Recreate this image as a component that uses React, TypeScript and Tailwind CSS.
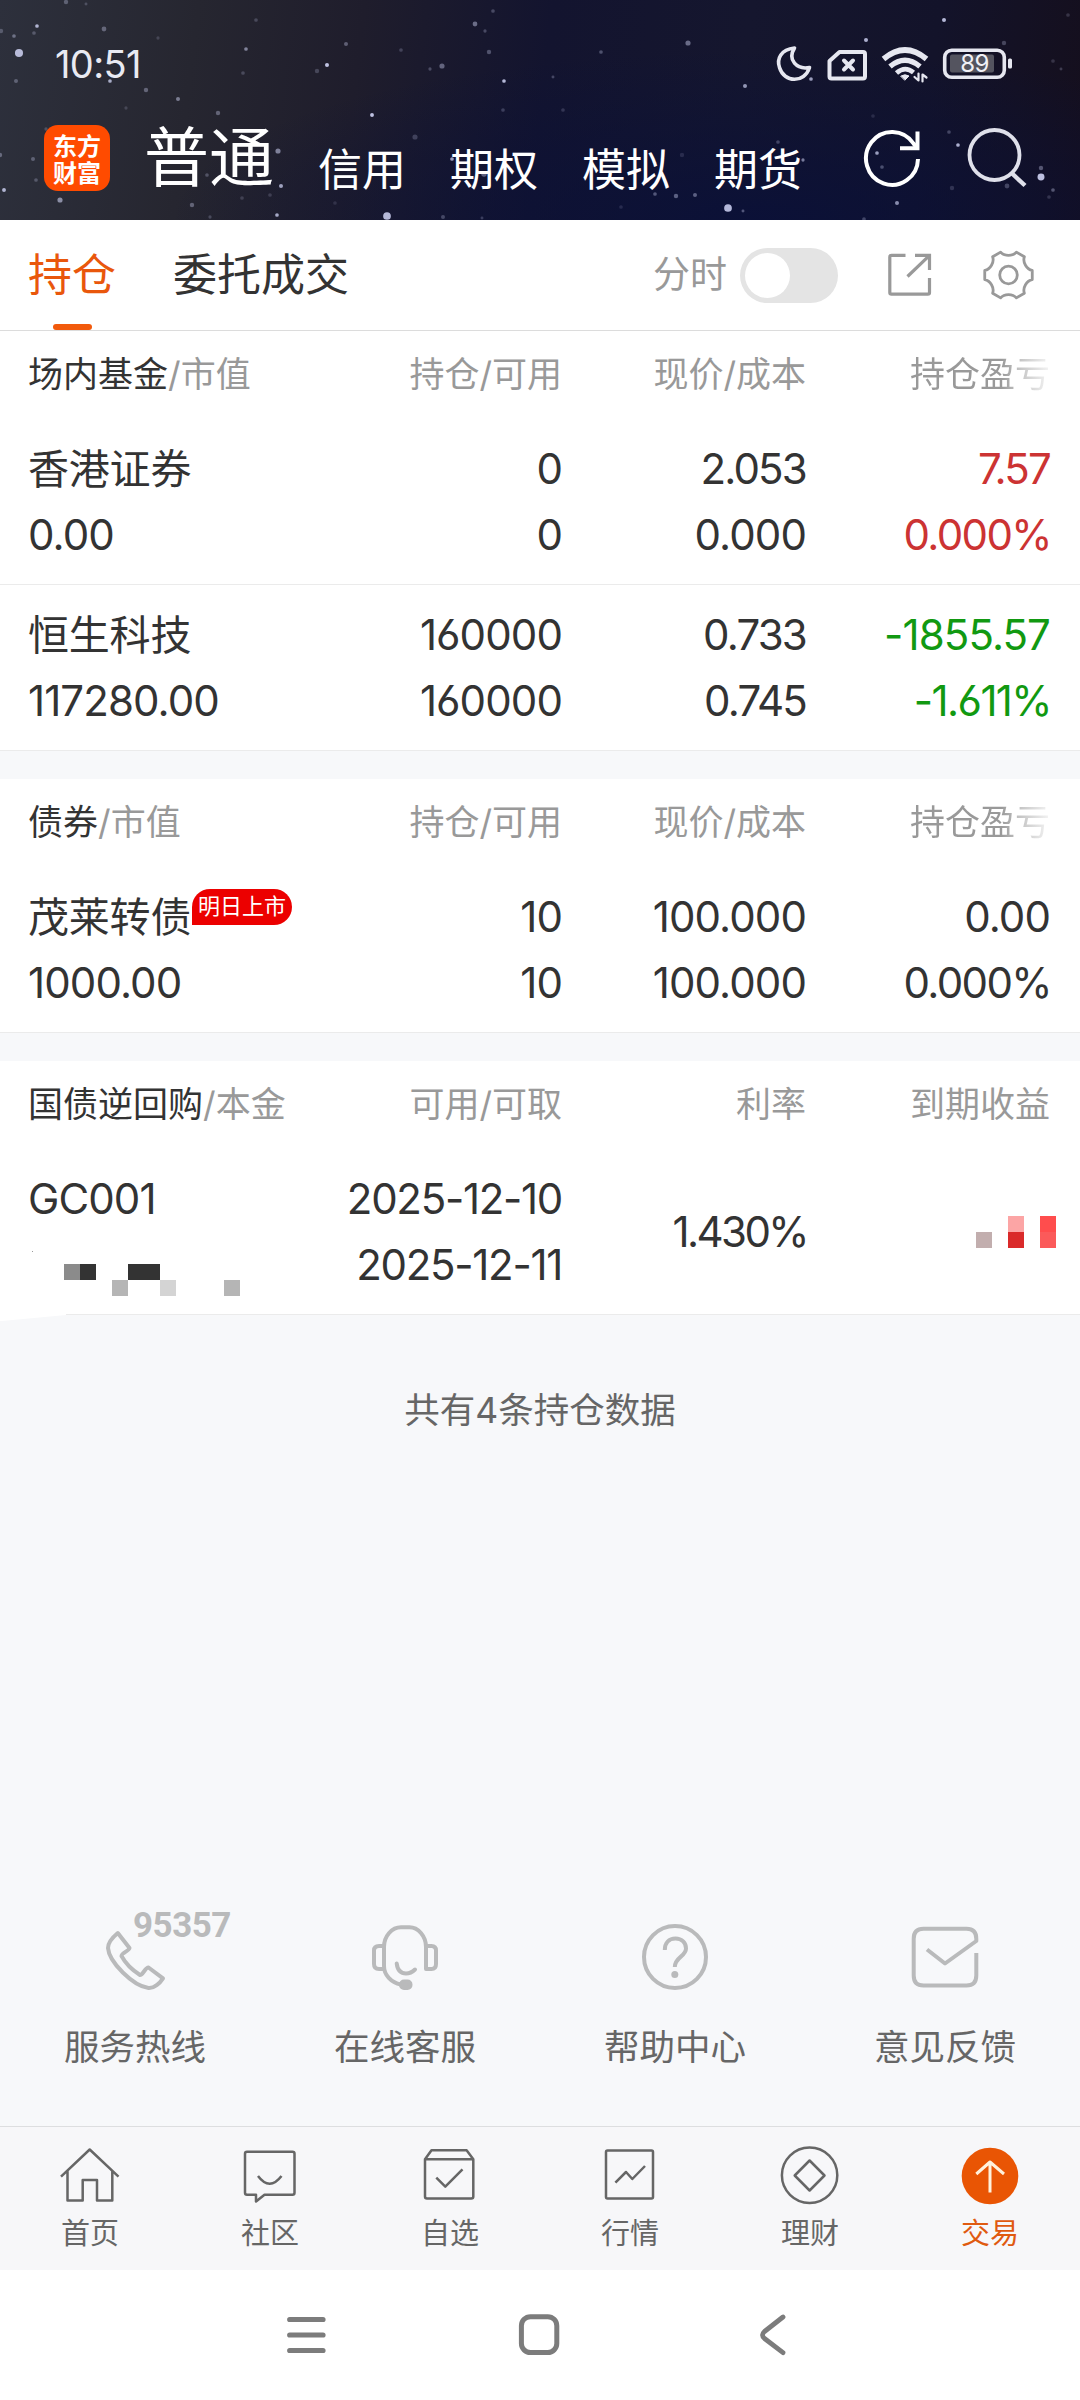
import type { ReactNode } from 'react'

type Star = [x: number, y: number, r: number, opacity: number]

const stars: Star[] = [
  [19, 53, 4.4, 0.95], [37, 26, 2, 0.9], [14, 36, 2, 0.45], [34, 33, 2, 0.3], [1, 31, 2.4, 0.3], [16, 81, 2.2, 0.35],
  [104, 29, 2.6, 0.4], [66, 2, 2.4, 0.35], [86, 4, 1.6, 0.25], [158, 38, 1.8, 0.2], [110, 81, 2, 0.85], [146, 90, 2.4, 0.4],
  [178, 99, 2.2, 0.55], [126, 108, 1.8, 0.2], [218, 113, 2.4, 0.4], [246, 49, 2, 0.6], [243, 73, 2, 0.25], [256, 20, 2, 0.25],
  [327, 65, 2.2, 1], [317, 71, 2.4, 0.25], [346, 44, 2.2, 0.4], [372, 115, 2.1, 1], [401, 50, 2, 0.25], [442, 66, 2.8, 0.45],
  [430, 69, 1.8, 0.3], [475, 24, 2.6, 0.5], [485, 31, 1.8, 0.3], [493, 11, 2, 0.3], [489, 52, 2.4, 0.35], [504, 81, 2, 0.95],
  [503, 110, 2, 0.25], [415, 137, 2.8, 0.25], [278, 151, 2.8, 0.6], [281, 186, 2.2, 0.8], [277, 215, 2, 0.85], [192, 205, 2.4, 0.4],
  [242, 198, 2, 0.2], [270, 195, 2, 0.2], [210, 217, 1.8, 0.25], [60, 200, 2.8, 0.65], [4, 190, 2.1, 0.9], [0, 155, 2.4, 0.4],
  [33, 159, 2.2, 0.35], [36, 180, 2, 0.3], [46, 129, 1.8, 0.25], [387, 216, 4.2, 0.95], [443, 217, 2.2, 0.3], [335, 203, 2, 0.15],
  [452, 159, 2, 0.8], [484, 174, 3, 0.45], [207, 175, 2, 0.3], [482, 218, 1.6, 0.25], [553, 77, 1.6, 0.3], [563, 110, 2, 0.2],
  [601, 52, 2, 0.35], [688, 43, 2.8, 0.5], [745, 86, 2.2, 0.75], [944, 20, 2.2, 0.95], [866, 40, 2.2, 0.9], [811, 79, 2, 0.8],
  [1004, 43, 2.4, 0.3], [1068, 15, 2, 0.2], [1053, 61, 2, 0.2], [1061, 69, 1.6, 0.25], [949, 132, 2, 0.3], [958, 145, 2, 0.9],
  [877, 153, 2, 0.8], [882, 167, 2, 0.35], [803, 160, 1.8, 0.6], [778, 142, 2, 0.3], [682, 155, 2.4, 0.15], [655, 194, 2, 0.4],
  [676, 196, 2.4, 0.45], [695, 195, 2.2, 0.45], [728, 208, 4.2, 0.95], [743, 211, 1.6, 0.4], [621, 207, 2, 0.15], [897, 203, 2.2, 0.7],
  [1041, 177, 3.8, 1], [1041, 168, 2.4, 0.4], [1053, 190, 2, 0.4], [1049, 197, 2, 0.2], [1007, 186, 2.6, 0.3], [952, 188, 2.4, 0.2],
  [864, 219, 2, 0.3], [873, 116, 2, 0.15],
]

const polar = (deg: number, r: number) => {
  const a = (deg * Math.PI) / 180
  return `${(1008.5 + r * Math.cos(a)).toFixed(2)} ${(275 + r * Math.sin(a)).toFixed(2)}`
}

const gearPath =
  [0, 60, 120, 180, 240, 300]
    .map((a, i) => `${i === 0 ? 'M' : 'L'}${polar(a - 11, 24.2)} L${polar(a + 11, 24.2)} C${polar(a + 17, 19)} ${polar(a + 43, 19)} ${polar(a + 49, 24.2)}`)
    .join(' ') + 'Z'

function StatusIcons() {
  return (
    <svg width="242" height="44" viewBox="774 41.5 242 44" fill="none" stroke="#e6e7f0" strokeLinecap="round" strokeLinejoin="round">
      <path d="M794.5 47.5C781 49 776.500 58 779.500 67C784 82.500 804.500 83 809.500 67C797 69.500 787 59.500 794.500 47.500Z" strokeWidth="3.600" />
      <path d="M829.500 60.500L839.500 51.500H863Q865 51.500 865 53.500V76Q865 78 863 78H831.500Q829.500 78 829.500 76Z" strokeWidth="4" />
      <path d="M844 60L853 69M853 60L844 69" strokeWidth="4" />
      <path d="M883.500 58.500Q905 40.500 926.500 58.500" strokeWidth="5.600" strokeLinecap="butt" />
      <path d="M890 66Q905 53.500 920 66" strokeWidth="5.300" strokeLinecap="butt" />
      <path d="M896.500 72.500Q905 65 913.500 72" strokeWidth="4.800" strokeLinecap="butt" />
      <path d="M901 75.500Q905 73 909 75.500L905 79.500Z" fill="#e6e7f0" strokeWidth="1" />
      <path d="M918.500 73V80L914.500 76.500M922.500 81V74L926.500 77" strokeWidth="2.200" />
      <rect x="944.700" y="49.700" width="59.600" height="27" rx="7" strokeWidth="3.600" />
      <rect x="950" y="54" width="44" height="18" rx="2" fill="#54545f" stroke="none" />
      <rect x="1008" y="58" width="4" height="10" rx="1.500" fill="#e6e7f0" stroke="none" />
      <text x="974.500" y="71.800" textAnchor="middle" fill="#f0f0f6" stroke="none" className="font-['Inter'] text-[24px] font-normal tracking-[-0.5px]">89</text>
    </svg>
  )
}

function Header() {
  return (
    <header className="relative h-[220px] overflow-hidden bg-[radial-gradient(ellipse_at_70%_100%,rgba(10,16,56,0.9),rgba(10,16,56,0)_55%),linear-gradient(97deg,#2d303c_0%,#262630_18%,#1f1d2c_33%,#13142f_50%,#15162e_68%,#13132a_85%,#150f1d_100%)]">
      <svg className="absolute inset-0 blur-[0.6px]" width="1080" height="220" viewBox="0 0 1080 220" fill="#d0d4f5">
        {stars.map(([x, y, r, o], i) => (
          <circle key={i} cx={x} cy={y} r={r * 0.92} opacity={o * 0.9} />
        ))}
      </svg>
      <div className="relative flex h-[125px] items-center justify-between pt-[2px] pr-[64px] pl-[55px]">
        <span className="text-[38px] leading-none tracking-[-0.600px] text-[#e9eaf2]">10:51</span>
        <StatusIcons />
      </div>
      <div className="relative flex items-start pl-[44px] text-white">
        <div className="flex size-[66px] items-center justify-center rounded-[14px] bg-[#ff4b00] text-center font-['Noto_Sans_CJK_SC'] text-[24px] leading-[27px] font-bold">
          东方
          <br />
          财富
        </div>
        <nav className="flex text-[44px] leading-[44px]">
          <span className="ml-[34px] text-[65px] leading-[66px]">普通</span>
          {['信用', '期权', '模拟', '期货'].map((t) => (
            <span key={t} className="relative top-[1px] mt-[22px] ml-[44px]">{t}</span>
          ))}
        </nav>
        <svg className="ml-[60px]" width="60" height="66" viewBox="862 125 60 66" fill="none" stroke="#fff" strokeWidth="4">
          <path d="M918 159A26 26.500 0 1 1 913.500 143.500L917 148" />
          <path d="M917.500 131.500V148.200H900" />
        </svg>
        <svg className="ml-[44px]" width="62" height="66" viewBox="966 125 62 66" fill="none" stroke="#dfe0ea" strokeWidth="3.800">
          <circle cx="994.500" cy="155" r="25" />
          <path d="M1011 172.500L1025 185.500" strokeWidth="4.400" />
        </svg>
      </div>
    </header>
  )
}

function Tabs() {
  return (
    <div className="flex h-[111px] items-center border-b border-[#dcdcdc] bg-white pl-[28px] text-[44px] leading-[110px] text-[#333]">
      <div className="relative text-[#e9570c]">
        持仓
        <i className="absolute bottom-0 left-[25px] h-[6px] w-[39px] rounded-full bg-[#f25a0c]" />
      </div>
      <span className="ml-[57px]">委托成交</span>
      <span className="ml-[304px] text-[37px] text-[#999]">分时</span>
      <div className="ml-[13px] flex h-[55px] w-[98px] items-center rounded-full bg-[#e4e4e4] pl-[5px]">
        <i className="size-[45px] rounded-full bg-white" />
      </div>
      <svg className="ml-[48px]" width="48" height="50" viewBox="886 250 48 50" fill="none" stroke="#999" strokeWidth="3.200">
        <path d="M905.500 255.300H891.500Q889.800 255.300 889.800 257V292.500Q889.800 294.200 891.500 294.200H927.800Q929.500 294.200 929.500 292.500V278" />
        <path d="M915 255.300H929.500V270M929 255.800L907.500 276.500" />
      </svg>
      <svg className="ml-[47px]" width="55" height="54" viewBox="981 248 55 54" fill="none" stroke="#999" strokeWidth="2.800" strokeLinejoin="round">
        <path d={gearPath} />
        <circle cx="1008.500" cy="275" r="8.800" />
      </svg>
    </div>
  )
}

const columns = 'grid grid-cols-[344px_190px_244px_244px] pl-[28px] pr-[30px]'

function Section({ title, sub, heads, fade, children }: { title: string; sub: string; heads: string[]; fade?: boolean; children: ReactNode }) {
  return (
    <section className="bg-white">
      <div className={`${columns} h-[88px] text-right text-[35px] leading-[87px] text-[#999]`}>
        <span className="text-left whitespace-nowrap">
          <span className="text-[#333]">{title}</span>/{sub}
        </span>
        {heads.map((h, i) => (
          <span
            key={h}
            className={
              fade && i === 2
                ? 'bg-[linear-gradient(90deg,#999_80%,rgba(153,153,153,0.6)_87%,rgba(153,153,153,0.1)_100%)] bg-clip-text text-transparent'
                : 'whitespace-nowrap'
            }
          >
            {h}
          </span>
        ))}
      </div>
      {children}
    </section>
  )
}

function lineClass(line: string) {
  if (/^1\..*%/.test(line)) return '-mr-[1px] h-[66px] whitespace-nowrap tracking-[-2.600px]'
  if (line.includes('%')) return '-mr-[1px] h-[66px] whitespace-nowrap tracking-[-1.600px]'
  if (line.includes('-12-')) return '-ml-[30px] h-[66px] whitespace-nowrap tracking-[-1.300px]'
  if (/^\d\.\d*[1-9]/.test(line)) return 'h-[66px] whitespace-nowrap tracking-[-1.800px]'
  if (/^[一-龥]/.test(line)) return 'relative h-[66px] whitespace-nowrap text-[41px] tracking-[-0.200px]'
  return 'h-[66px] whitespace-nowrap'
}

function Row({ cells, tone = '', children }: { cells: string[][]; tone?: string; children?: ReactNode }) {
  return (
    <div className={`${columns} h-[166px] items-center border-b border-[#ebebeb] pt-px text-right text-[42px] leading-[66px] tracking-[-0.9px] text-[#333] [font-feature-settings:'cv03','cv04']`}>
      {cells.map((lines, c) => (
        <div key={c} className={c === 0 ? 'text-left' : c === 3 ? tone : ''}>
          {lines.map((l, i) => (
            <div key={i} className={lineClass(l)}>
              {l}
              {l === '茂莱转债' && (
                <span className="absolute top-[5px] left-[164px] h-[36px] w-[100px] rounded-[18px] rounded-bl-none bg-[#ec0000] text-center text-[22px] leading-[35px] tracking-normal text-white">
                  明日上市
                </span>
              )}
            </div>
          ))}
          {c === 3 && children}
        </div>
      ))}
    </div>
  )
}

function PrincipalMosaic() {
  return (
    <svg className="absolute top-[1250px] left-0" width="260" height="74" viewBox="0 1250 260 74" shapeRendering="crispEdges">
      <path d="M0 1312H66V1315L2 1321H0Z" fill="#fff" shapeRendering="auto" />
      <rect x="32" y="1251" width="1" height="1" fill="#999" />
      <rect x="64" y="1264" width="16" height="16" fill="#8b8b8b" />
      <rect x="80" y="1264" width="16" height="16" fill="#333" />
      <rect x="128" y="1264" width="32" height="16" fill="#333" />
      <rect x="112" y="1280" width="16" height="16" fill="#b5b5b5" />
      <rect x="160" y="1280" width="16" height="16" fill="#d4d4d4" />
      <rect x="224" y="1280" width="16" height="16" fill="#b5b5b5" />
    </svg>
  )
}

function IncomeMosaic() {
  return (
    <svg className="-mr-[6px] ml-auto block" width="80" height="32" viewBox="976 1216 80 32" shapeRendering="crispEdges">
      <rect x="976" y="1232" width="16" height="16" fill="#c2aeae" />
      <rect x="1008" y="1216" width="16" height="16" fill="#fca5a5" />
      <rect x="1008" y="1232" width="16" height="16" fill="#da2a2a" />
      <rect x="1040" y="1216" width="16" height="16" fill="#ff4d4d" />
      <rect x="1040" y="1232" width="16" height="16" fill="#fb5a5a" />
    </svg>
  )
}

const services = [
  {
    label: '服务热线',
    box: '100 1922 70 70',
    icon: <path d="M117.800 1933L129.500 1948C129 1951 121.500 1953 121.500 1956C125 1962.500 133 1970.500 140 1975C143 1975 145.500 1967 148.500 1967.500L163 1978.300C160 1983 154 1988.500 148.500 1988C133 1986 109 1962 108 1948C108 1942 113 1937 117.800 1933Z" />,
  },
  {
    label: '在线客服',
    box: '370 1922 70 70',
    icon: (
      <>
        <path d="M384 1969H379Q374 1969 374 1964V1950.500Q374 1946 379 1946H384V1947C384 1936 392 1927.300 401 1927.300H409.500C418 1927.300 426 1936 426 1947V1969H431.500Q436 1969 436 1964V1950.500Q436 1946 431.500 1946H426" />
        <path d="M384 1946V1966C384 1975 391 1982.500 401 1984.500" />
        <path d="M396.700 1963.500C397.500 1970 401 1973.500 406 1973.500C410 1973.500 413 1971.500 415 1969.500" strokeLinecap="round" />
        <rect x="401" y="1981.500" width="9.500" height="6.500" rx="3" fill="#b9babb" />
      </>
    ),
  },
  {
    label: '帮助中心',
    box: '640 1922 70 70',
    icon: (
      <>
        <circle cx="675" cy="1957" r="31" />
        <path d="M664.800 1950C664.800 1943 669 1938.500 675.500 1938.500C682 1938.500 686 1943 686 1948.500C686 1956.500 674.800 1957 674.800 1967" />
        <circle cx="674.800" cy="1974.500" r="3.500" fill="#b9babb" stroke="none" />
      </>
    ),
  },
  {
    label: '意见反馈',
    box: '910 1922 70 70',
    icon: <path d="M976.300 1953V1975.500Q976.300 1985.500 966.500 1985.500H923.500Q913.700 1985.500 913.700 1975.500V1938.700Q913.700 1928.700 923.500 1928.700H966.500Q976.300 1928.700 976.300 1938.700V1941L945 1963.500L927 1949.500" />,
  },
]

const tabItems = [
  {
    label: '首页',
    box: '60 2146 60 60',
    icon: <path d="M61 2176.700L89.700 2149.500L118.500 2176.700M67.500 2171V2200.500H82.700V2180H97V2200.500H112.300V2171" />,
  },
  {
    label: '社区',
    box: '240 2146 60 60',
    icon: <path d="M247 2151.700H292.500Q294.500 2151.700 294.500 2153.700V2192.700Q294.500 2194.700 292.500 2194.700H264.500L256 2201.500V2194.700H247Q245 2194.700 245 2192.700V2153.700Q245 2151.700 247 2151.700ZM258 2176Q269.600 2191.500 281.500 2176" />,
  },
  {
    label: '自选',
    box: '420 2146 60 60',
    icon: <path d="M425 2159.300L431.500 2150.300H466.600L473.300 2159.300V2196.500Q473.300 2198.500 471.300 2198.500H427Q425 2198.500 425 2196.500ZM425 2159.300H473.300M436.300 2177.700L445.300 2186.700L462.500 2169.300" />,
  },
  {
    label: '行情',
    box: '600 2146 60 60',
    icon: <path d="M607.500 2150.500H651.500Q653 2150.500 653 2152V2197Q653 2198.500 651.500 2198.500H607.500Q606 2198.500 606 2197V2152Q606 2150.500 607.500 2150.500ZM615.400 2182.700L626 2172L632.300 2179L645 2166" />,
  },
  {
    label: '理财',
    box: '780 2146 60 60',
    icon: (
      <>
        <circle cx="809.600" cy="2175.300" r="27.700" />
        <path d="M809.600 2160.500L824.500 2175.500L809.600 2190.500L794.700 2175.500Z" />
      </>
    ),
  },
  {
    label: '交易',
    box: '960 2146 60 60',
    active: true,
    icon: (
      <>
        <circle cx="990" cy="2176" r="28.300" fill="#e95504" stroke="none" />
        <path d="M990 2192.500V2162.500M976.300 2174L990 2162L1004 2174" stroke="#fff1dc" strokeWidth="3" />
      </>
    ),
  },
]

export default function App() {
  return (
    <div className="relative flex h-[2400px] w-[1080px] flex-col overflow-hidden bg-[#f7f8fa] font-['Inter','Noto_Sans_CJK_SC',sans-serif]">
      <Header />
      <Tabs />
      <main className="flex flex-col gap-[28px]">
        <Section title="场内基金" sub="市值" heads={['持仓/可用', '现价/成本', '持仓盈亏']} fade>
          <Row tone="text-[#cc3333]" cells={[['香港证券', '0.00'], ['0', '0'], ['2.053', '0.000'], ['7.57', '0.000%']]} />
          <Row tone="text-[#119911]" cells={[['恒生科技', '117280.00'], ['160000', '160000'], ['0.733', '0.745'], ['-1855.57', '-1.611%']]} />
        </Section>
        <Section title="债券" sub="市值" heads={['持仓/可用', '现价/成本', '持仓盈亏']} fade>
          <Row cells={[['茂莱转债', '1000.00'], ['10', '10'], ['100.000', '100.000'], ['0.00', '0.000%']]} />
        </Section>
        <Section title="国债逆回购" sub="本金" heads={['可用/可取', '利率', '到期收益']}>
          <Row cells={[['GC001', ''], ['2025-12-10', '2025-12-11'], ['1.430%'], []]}>
            <IncomeMosaic />
          </Row>
        </Section>
      </main>
      <PrincipalMosaic />
      <p className="mt-[74px] text-center text-[35.500px] leading-[44px] text-[#666]">共有4条持仓数据</p>
      <div className="mt-auto grid h-[204px] grid-cols-4 text-[#666]">
        {services.map((s, i) => (
          <div key={s.label} className="relative flex flex-col items-center">
            <svg width="70" height="70" viewBox={s.box} fill="none" stroke="#b9babb" strokeWidth="4" strokeLinejoin="round">
              {s.icon}
            </svg>
            {i === 0 && (
              <span className="absolute -top-[14px] left-[133px] font-['Roboto'] text-[35px] leading-[36px] font-bold tracking-[-0.500px] text-[#b9babb]">95357</span>
            )}
            <span className="mt-[34px] text-[35.500px] leading-[44px]">{s.label}</span>
          </div>
        ))}
      </div>
      <nav className="grid h-[144px] grid-cols-6 border-t border-[#dddee0] bg-[#f7f7f9] text-[#666]">
        {tabItems.map((t) => (
          <div key={t.label} className={t.active ? 'flex flex-col items-center pt-[19px] text-[#e05a10]' : 'flex flex-col items-center pt-[19px]'}>
            <svg width="60" height="60" viewBox={t.box} fill="none" stroke="#666" strokeWidth="2.500" strokeLinejoin="round">
              {t.icon}
            </svg>
            <span className="mt-[8px] text-[29px] leading-[40px]">{t.label}</span>
          </div>
        ))}
      </nav>
      <div className="flex h-[130px] items-start bg-white pt-[43px] pl-[284px]">
        <svg width="44" height="44" viewBox="284 2313 44 44" fill="none" stroke="#7c7c7c" strokeWidth="5.200" strokeLinecap="round">
          <path d="M289.700 2319.500H323M289.700 2335H323M289.700 2350.500H323" />
        </svg>
        <svg className="ml-[189px]" width="44" height="44" viewBox="517 2313 44 44" fill="none" stroke="#7c7c7c" strokeWidth="5">
          <rect x="521.400" y="2316.700" width="35.400" height="35.800" rx="9" />
        </svg>
        <svg className="ml-[195px]" width="44" height="44" viewBox="756 2313 44 44" fill="none" stroke="#7c7c7c" strokeWidth="4.800" strokeLinecap="round" strokeLinejoin="round">
          <path d="M783 2317L764.500 2331.500Q760.500 2335 764.500 2338.500L783 2352.700" />
        </svg>
      </div>
    </div>
  )
}
